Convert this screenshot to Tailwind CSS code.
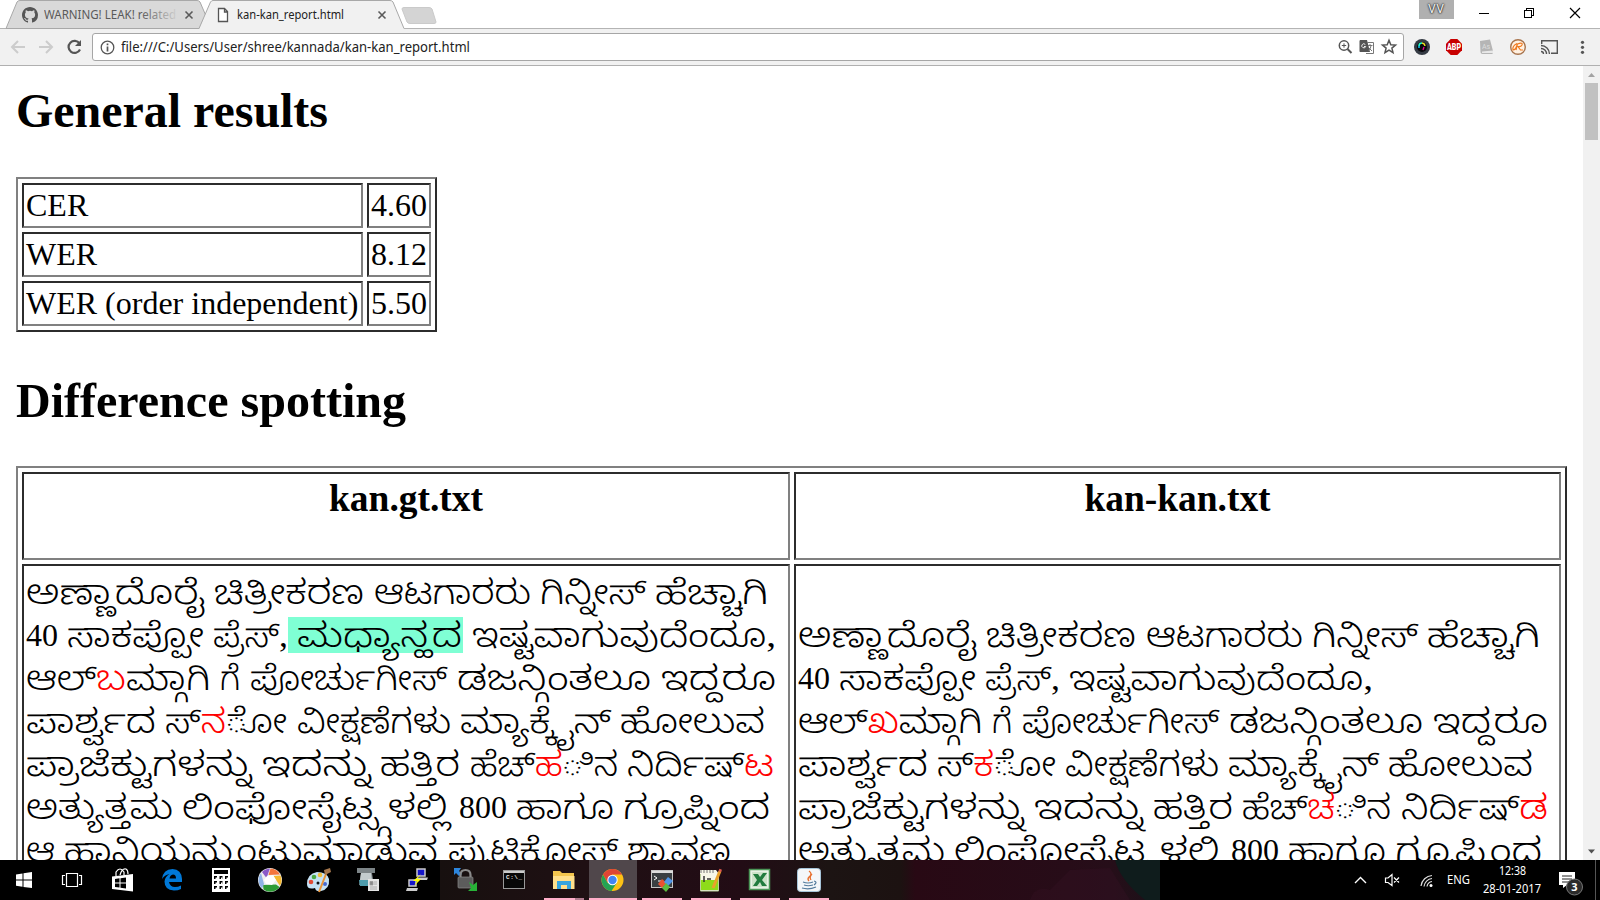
<!DOCTYPE html>
<html lang="kn">
<head>
<meta charset="utf-8">
<title>kan-kan_report.html</title>
<script src="https://cdn.jsdelivr.net/npm/@tailwindcss/browser@4"></script>
</head>
<body class="w-[1600px] h-[900px] overflow-hidden bg-white flex flex-col text-black font-['Noto_Sans','Open_Sans',sans-serif]">

<!-- Tab strip -->
<header class="relative h-[29px] shrink-0 bg-white">
  <svg class="absolute left-0 top-0" width="460" height="29" viewBox="0 0 460 29">
    <path d="M0 28.5H1600" stroke="#b4b4b4"/>
    <path d="M6 28.5 17 2Q18 .5 20 .5H197Q199 .5 200 2L206 16 200 28.500Z" fill="#d9d9d9" stroke="#a8a8a8"/>
    <path d="M199 29 210.500 2Q211.500 .5 213 .5H390Q392 .5 393 2L404 28.500V29Z" fill="#f1f1f1"/>
    <path d="M199 28.500 210.500 2Q211.500 .5 213 .5H390Q392 .5 393 2L404 28.500" fill="none" stroke="#a8a8a8"/>
    <path d="M404 7.500H429Q431 7.500 432 9L436 22Q436 23.500 434 23.500H410Q408 23.500 407 22L402 9Q402 7.500 404 7.500Z" fill="#d4d4d4" stroke="#cacaca"/>
    <path transform="translate(22 7)" fill="#555" d="M8 0C3.580 0 0 3.580 0 8c0 3.540 2.290 6.530 5.470 7.590.4.070.55-.17.55-.38v-1.490c-2.010.37-2.530-.49-2.690-.94-.09-.23-.48-.94-.82-1.130-.28-.15-.68-.52-.01-.53.63-.01 1.080.58 1.230.82.720 1.210 1.870.87 2.330.66.070-.52.28-.87.510-1.070-1.780-.2-3.640-.89-3.640-3.950 0-.87.310-1.590.82-2.150-.08-.2-.36-1.020.08-2.120 0 0 .67-.21 2.200.82a7.500 7.500 0 0 1 4 0c1.530-1.040 2.200-.82 2.200-.82.44 1.100.16 1.920.08 2.120.51.560.82 1.270.82 2.150 0 3.070-1.870 3.750-3.650 3.950.29.250.54.730.54 1.480v2.190c0 .21.150.46.55.38A8 8 0 0 0 16 8c0-4.420-3.580-8-8-8Z"/>
    <path d="M185.500 11.500l7 7m0-7l-7 7M378.500 11.500l7 7m0-7l-7 7" stroke="#5a5a5a" stroke-width="1.600"/>
    <path d="M218.500 8.500H224.500L227.500 11.500V21.500H218.500ZM224.500 8.500V12H227.500" fill="#fff" stroke="#555" stroke-width="1.300"/>
  </svg>
  <div class="absolute left-[44px] top-[6px] w-[132px] text-[12px] leading-[18px] whitespace-nowrap text-[#5a5a5a]"><span data-fit>WARNING! LEAK! related</span><div class="absolute right-0 top-0 w-[36px] h-[18px] bg-gradient-to-r from-[#d9d9d9]/0 to-[#d9d9d9]/90"></div></div>
  <div class="absolute left-[237px] top-[6px] w-[107px] text-[12px] leading-[18px] whitespace-nowrap text-[#222]"><span data-fit>kan-kan_report.html</span></div>
  <div class="absolute right-0 bottom-0 w-[1196px] h-px bg-[#b4b4b4]"></div>
  <div class="absolute left-[1419px] top-0 w-[35px] h-[19px] bg-[#b0b0b0] text-[#f5f5f5] text-[12px] leading-[18px] text-center tracking-[1px] [text-shadow:0_0_2px_#000,0_0_2px_#222]">VV</div>
  <svg class="absolute left-[1470px] top-0" width="120" height="26" fill="none" stroke="#000" shape-rendering="crispEdges">
    <path d="M9 13.500H19M54.500 10.500H61.500V17.500H54.500ZM56.500 10V8.500H63.500V15.500H62"/>
    <path d="M100 8l10 10m0-10l-10 10" shape-rendering="auto" stroke-width="1.200"/>
  </svg>
</header>

<!-- Toolbar -->
<nav class="h-[37px] shrink-0 bg-[#f1f1f1] border-b border-[#b0b0b0] flex items-start pt-[4px]">
  <svg class="shrink-0" width="92" height="28" fill="none" stroke="#ccc" stroke-width="2">
    <path d="M25 14H12.500M18 8l-6 6 6 6M39 14H51.500M46 8l6 6-6 6"/>
    <path d="M79.500 10.500A6 6 0 1 0 80 16.500" stroke="#555" stroke-width="2.200"/>
    <path d="M81 7V13H75Z" fill="#555" stroke="none"/>
  </svg>
  <div class="w-[1312px] h-[28px] shrink-0 bg-white border border-[#a6a6a6] rounded-[3px] flex items-center">
    <svg class="ml-[7px]" width="15" height="15" fill="none" stroke="#555"><circle cx="7.500" cy="7.500" r="6.300" stroke-width="1.300"/><path d="M7.500 6.500V11.500M7.500 3.500V5.200" stroke-width="1.700"/></svg>
    <div class="ml-[6px] w-[349px] text-[13.5px] leading-[20px] whitespace-nowrap text-[#222]"><span data-fit>file:///C:/Users/User/shree/kannada/kan-kan_report.html</span></div>
    <svg class="ml-auto mr-[5px]" width="60" height="18" fill="none" stroke="#555">
      <circle cx="6" cy="7.500" r="4.700" stroke-width="1.500"/><path d="M9.500 11l4 4" stroke-width="2"/><path d="M3.800 7.500H8.200M6 5.300V9.700"/>
      <path d="M22 2H29L32 14H22Q21.500 14 21.500 13V3Z" fill="#555" stroke="none"/><path d="M29 4.500H35.500V15.500H28M30 7.500H34.500M32 6V8M30.500 12.500Q33 10.500 33 7.500M30.500 9.500L34 13" stroke="#777"/><path d="M27.300 6.500A2 2 0 1 0 27.700 8.500H26" stroke="#eee"/>
      <path d="M51 2.300 52.800 6.800 57.500 7.100 53.900 10.100 55 14.700 51 12.200 47 14.700 48.100 10.100 44.500 7.100 49.200 6.800Z" stroke-width="1.500"/>
    </svg>
  </div>
  <svg class="shrink-0" width="196" height="28" viewBox="1404 33 196 28">
    <circle cx="1422" cy="47" r="8" fill="#343a43"/><circle cx="1422" cy="47" r="5" fill="#08080c"/><path d="M1419 46a3 3 0 0 1 3-3" stroke="#2fc" stroke-width="1.600" fill="none"/><path d="M1422 43a3.500 3.500 0 0 1 3 3" stroke="#ed2" stroke-width="1.400" fill="none"/><path d="M1419 46v2" stroke="#1be" stroke-width="1.600"/><path d="M1424 47l-1 3" stroke="#e09" stroke-width="1.300"/>
    <path d="M1450.700 39H1457.300L1462 43.700V50.300L1457.300 55H1450.700L1446 50.300V43.700Z" fill="#c80000"/>
    <text x="1447" y="50.300" textLength="14" lengthAdjust="spacingAndGlyphs" font-family="Roboto" font-weight="900" font-size="9" fill="#fff">ABP</text>
    <path d="M1480 41L1490 39.500 1493 51 1492.500 54H1482.500Q1480.500 54 1480.500 52Z" fill="#b5b5b5"/><path d="M1482 51.500L1493 50.500V53H1482Z" fill="#e8e8e8"/><text x="1482" y="49" font-size="7" font-family="Roboto" fill="#ddd">As</text>
    <circle cx="1518" cy="47" r="7.300" fill="#fff1e2" stroke="#a8744d" stroke-width="1.400"/><path d="M1517 43.500Q1512 46 1513 50Q1516 50 1517.500 43.500L1516 50M1517.500 44Q1523 42 1522 45Q1521 47 1518 46.500L1520.500 50H1523" fill="none" stroke="#f07a20" stroke-width="1.200"/>
    <path d="M1541.700 44V40.800H1557.300V53.200H1551" fill="none" stroke="#555" stroke-width="1.400"/><path d="M1541 51.500a2.500 2.500 0 0 1 2.500 2.500M1541 48.500a5.500 5.500 0 0 1 5.500 5.500M1541 45.500a8.500 8.500 0 0 1 8.500 8.500" fill="none" stroke="#555" stroke-width="1.400"/>
    <g fill="#555"><circle cx="1582.500" cy="42.300" r="1.600"/><circle cx="1582.500" cy="47.300" r="1.600"/><circle cx="1582.500" cy="52.300" r="1.600"/></g>
  </svg>
</nav>

<!-- Document viewport -->
<div class="h-[794px] shrink-0 flex overflow-hidden">
  <main class="w-[1583px] h-full overflow-hidden pl-[16px] text-[32px] font-['Liberation_Serif','Noto_Sans_Kannada',serif]">
    <h2 class="mt-[18px] h-[54px] w-[312px] text-[48px] leading-[54px] font-bold whitespace-nowrap"><span data-fit>General results</span></h2>
    <div class="mt-[39px] w-[421px] p-[4px] border-2 border-t-[#808080] border-l-[#808080] border-r-[#2c2c2c] border-b-[#2c2c2c] grid grid-cols-[341px_64px] gap-[4px] leading-[37px] whitespace-nowrap *:h-[45px] *:p-[2px] *:border-2 *:border-t-[#2c2c2c] *:border-l-[#2c2c2c] *:border-r-[#808080] *:border-b-[#808080]">
      <div>CER</div><div>4.60</div>
      <div>WER</div><div>8.12</div>
      <div>WER (order independent)</div><div>5.50</div>
    </div>
    <h2 class="mt-[42px] h-[54px] w-[390px] text-[48px] leading-[54px] font-bold whitespace-nowrap"><span data-fit>Difference spotting</span></h2>
    <div class="mt-[38px] w-[1551px] h-[600px] p-[4px] border-2 border-t-[#808080] border-l-[#808080] border-r-[#2c2c2c] border-b-[#2c2c2c] grid grid-cols-[768px_767px] grid-rows-[88px_500px] gap-[4px] whitespace-nowrap *:border-2 *:border-t-[#2c2c2c] *:border-l-[#2c2c2c] *:border-r-[#808080] *:border-b-[#808080]">
      <h3 class="text-center font-bold text-[37.44px] leading-[42px] pt-[4px]">kan.gt.txt</h3>
      <h3 class="text-center font-bold text-[37.44px] leading-[42px] pt-[4px]">kan-kan.txt</h3>
      <div class="pl-[2px] pt-[5px] leading-[43px] text-[34px] font-light *:h-[43px] *:flex *:justify-between">
        <div class="w-[742px]"><div class="w-[179px]"><span data-fit>ಅಣ್ಣಾದೊರೈ</span></div><div class="w-[150px]"><span data-fit>ಚಿತ್ರೀಕರಣ</span></div><div class="w-[157px]"><span data-fit>ಆಟಗಾರರು</span></div><div class="w-[106px]"><span data-fit>ಗಿನ್ನೀಸ್</span></div><div class="w-[113px]"><span data-fit>ಹೆಚ್ಚಾಗಿ</span></div></div>
        <div class="w-[750px]"><div class="w-[262px] flex justify-between"><div class="w-[32px] text-[32px]">40</div><div class="w-[137px]"><span data-fit>ಸಾಕಪ್ಪೋ</span></div><div class="w-[75px]"><span data-fit>ಪ್ರೆಸ್,</span></div></div><div class="w-[175px] h-[36px] mt-[3px] pl-[9px] leading-[38px] bg-[#7fffd4]"><div class="w-[165px]"><span data-fit>ಮಧ್ಯಾನ್ಹದ</span></div></div><div class="w-[313px] pl-[9px]"><div class="w-[304px]"><span data-fit>ಇಷ್ಟವಾಗುವುದೆಂದೂ,</span></div></div></div>
        <div class="w-[750px]"><div class="w-[184px]"><span data-fit>ಆಲ್&zwnj;<span class="text-[#f00]">ಬ</span>ಮ್ಗಾಗಿ</span></div><div class="w-[20px]"><span data-fit>ಗೆ</span></div><div class="w-[197px]"><span data-fit>ಪೋರ್ಚುಗೀಸ್</span></div><div class="w-[194px]"><span data-fit>ಡಜನ್ಗಿಂತಲೂ</span></div><div class="w-[115px]"><span data-fit>ಇದ್ದರೂ</span></div></div>
        <div class="w-[739px]"><div class="w-[130px]"><span data-fit>ಪಾರ್ಶ್ವದ</span></div><div class="w-[122px]"><span data-fit>ಸ್&zwnj;<span class="text-[#f00]">ನ</span>&zwnj;ೋ</span></div><div class="w-[154px]"><span data-fit>ವೀಕ್ಷಣೆಗಳು</span></div><div class="w-[151px]"><span data-fit>ಮ್ಯಾಕ್ಕೈನ್</span></div><div class="w-[145px]"><span data-fit>ಹೋಲುವ</span></div></div>
        <div class="w-[748px]"><div class="w-[226px]"><span data-fit>ಪ್ರಾಜೆಕ್ಟುಗಳನ್ನು</span></div><div class="w-[109px]"><span data-fit>ಇದನ್ನು</span></div><div class="w-[80px]"><span data-fit>ಹತ್ತಿರ</span></div><div class="w-[148px]"><span data-fit>ಹೆಚ್&zwnj;<span class="text-[#f00]">ಹ</span>&zwnj;ಿನ</span></div><div class="w-[147px]"><span data-fit>ನಿರ್ದಿಷ್&zwnj;<span class="text-[#f00]">ಟ</span></span></div></div>
        <div class="w-[744px]"><div class="w-[147px]"><span data-fit>ಅತ್ಯುತ್ತಮ</span></div><div class="w-[268px]"><span data-fit>ಲಿಂಫೋಸೈಟ್ಸ್ಗಳಲ್ಲಿ</span></div><div class="w-[48px] text-[32px]">800</div><div class="w-[98px]"><span data-fit>ಹಾಗೂ</span></div><div class="w-[147px]"><span data-fit>ಗ್ರೂಪ್ನಿಂದ</span></div></div>
        <div class="w-[705px]"><div class="w-[29px]"><span data-fit>ಆ</span></div><div class="w-[374px]"><span data-fit>ಹಾನಿಯನ್ನುಂಟುಮಾಡುವ</span></div><div class="w-[170px]"><span data-fit>ಪ್ರುಟಿಕೋಸ್</span></div><div class="w-[104px]"><span data-fit>ಶ್ರಾವಣ</span></div></div>
      </div>
      <div class="pl-[2px] pt-[48px] leading-[43px] text-[34px] font-light *:h-[43px] *:flex *:justify-between">
        <div class="w-[742px]"><div class="w-[179px]"><span data-fit>ಅಣ್ಣಾದೊರೈ</span></div><div class="w-[150px]"><span data-fit>ಚಿತ್ರೀಕರಣ</span></div><div class="w-[157px]"><span data-fit>ಆಟಗಾರರು</span></div><div class="w-[106px]"><span data-fit>ಗಿನ್ನೀಸ್</span></div><div class="w-[113px]"><span data-fit>ಹೆಚ್ಚಾಗಿ</span></div></div>
        <div class="w-[575px]"><div class="w-[262px] flex justify-between"><div class="w-[32px] text-[32px]">40</div><div class="w-[137px]"><span data-fit>ಸಾಕಪ್ಪೋ</span></div><div class="w-[75px]"><span data-fit>ಪ್ರೆಸ್,</span></div></div><div class="w-[313px] pl-[9px]"><div class="w-[304px]"><span data-fit>ಇಷ್ಟವಾಗುವುದೆಂದೂ,</span></div></div></div>
        <div class="w-[750px]"><div class="w-[184px]"><span data-fit>ಆಲ್&zwnj;<span class="text-[#f00]">ಖ</span>ಮ್ಗಾಗಿ</span></div><div class="w-[20px]"><span data-fit>ಗೆ</span></div><div class="w-[197px]"><span data-fit>ಪೋರ್ಚುಗೀಸ್</span></div><div class="w-[194px]"><span data-fit>ಡಜನ್ಗಿಂತಲೂ</span></div><div class="w-[115px]"><span data-fit>ಇದ್ದರೂ</span></div></div>
        <div class="w-[735px]"><div class="w-[130px]"><span data-fit>ಪಾರ್ಶ್ವದ</span></div><div class="w-[119px]"><span data-fit>ಸ್&zwnj;<span class="text-[#f00]">ಕ</span>&zwnj;ೋ</span></div><div class="w-[154px]"><span data-fit>ವೀಕ್ಷಣೆಗಳು</span></div><div class="w-[151px]"><span data-fit>ಮ್ಯಾಕ್ಕೈನ್</span></div><div class="w-[145px]"><span data-fit>ಹೋಲುವ</span></div></div>
        <div class="w-[750px]"><div class="w-[226px]"><span data-fit>ಪ್ರಾಜೆಕ್ಟುಗಳನ್ನು</span></div><div class="w-[109px]"><span data-fit>ಇದನ್ನು</span></div><div class="w-[80px]"><span data-fit>ಹತ್ತಿರ</span></div><div class="w-[149px]"><span data-fit>ಹೆಚ್&zwnj;<span class="text-[#f00]">ಚ</span>&zwnj;ಿನ</span></div><div class="w-[147px]"><span data-fit>ನಿರ್ದಿಷ್&zwnj;<span class="text-[#f00]">ಡ</span></span></div></div>
        <div class="w-[744px]"><div class="w-[147px]"><span data-fit>ಅತ್ಯುತ್ತಮ</span></div><div class="w-[268px]"><span data-fit>ಲಿಂಫೋಸೈಟ್ಸ್ಗಳಲ್ಲಿ</span></div><div class="w-[48px] text-[32px]">800</div><div class="w-[98px]"><span data-fit>ಹಾಗೂ</span></div><div class="w-[147px]"><span data-fit>ಗ್ರೂಪ್ನಿಂದ</span></div></div>
      </div>
    </div>
  </main>
  <aside class="w-[17px] h-full bg-[#f1f1f1] flex flex-col items-center">
    <svg width="17" height="17"><path d="M5 11H12L8.500 7Z" fill="#a3a3a3"/></svg>
    <div class="w-[13px] h-[57px] bg-[#c1c1c1]"></div>
    <svg class="mt-auto" width="17" height="17"><path d="M5 6.500H12L8.500 10.500Z" fill="#505050"/></svg>
  </aside>
</div>

<!-- Taskbar -->
<footer class="h-[40px] shrink-0 bg-black flex text-white">
  <svg class="shrink-0" width="1160" height="40" viewBox="0 860 1160 40">
    <defs>
      <linearGradient id="wall"><stop offset="0" stop-color="#17100f"/><stop offset=".2" stop-color="#1f1013"/><stop offset=".42" stop-color="#220c15"/><stop offset=".54" stop-color="#1c1413"/><stop offset=".64" stop-color="#1c1211"/><stop offset=".66" stop-color="#280914"/><stop offset=".87" stop-color="#270c18"/><stop offset=".93" stop-color="#260e19"/><stop offset="1" stop-color="#1b1118"/></linearGradient>
    </defs>
    <rect x="440" y="860" width="720" height="40" fill="url(#wall)"/>
    <path d="M1115 860H1160V900H1145Q1120 880 1115 860Z" fill="#0f1c1c"/>
    <path d="M1030 900Q1035 885 1050 890L1070 870 1110 868 1130 900Z" fill="#351223" opacity=".4"/>
    <rect x="589" y="860" width="48" height="40" fill="#50474b"/>
    <g fill="#ffaec9"><path d="M544 898H575V900H544ZM589 898H637V900H589ZM642 898H682V900H642ZM691 898H731V900H691ZM740 898H780V900H740ZM789 898H829V900H789Z"/></g><rect x="575" y="898" width="9" height="2" fill="#b07a8e"/>
    <!-- start -->
    <path d="M16 874.500L22.500 873.500V879.500H16ZM23.500 873.300L32 872V879.500H23.500ZM16 880.500H22.500V886.700L16 885.700ZM23.500 880.500H32V888L23.500 886.900Z" fill="#fff"/>
    <!-- task view -->
    <path d="M66.500 873.500H77.500V886.500H66.500ZM65 875.500H62.500V884.500H65M79 875.500H81.500V884.500H79" fill="none" stroke="#fff" stroke-width="1.200"/>
    <!-- store -->
    <path d="M112 876.500L133 874V891.500L112 889Z" fill="#fff"/><path d="M116 876V872Q120 866 124 872V875M120 875Q122 868 126 869Q128 870 128 874" fill="none" stroke="#fff" stroke-width="1.200"/><path d="M115 879L119.500 878.300V882.500H115ZM120.500 878.200L126 877.500V882.500H120.500ZM115 883.500H119.500V887.500L115 887ZM120.500 883.500H126V888.500L120.500 887.700Z" fill="#000"/>
    <!-- edge -->
    <path d="M162 879Q163 869.500 172.500 869Q181.500 869.500 182 879V882H169Q170 887 175 887Q178 887 181 885.500V889Q178 890.500 174 890.500Q164.500 890 164.500 881.500Q165 876.500 169.500 874Q164.500 875 162 879ZM169.500 878.500H176Q176 874.500 173 874.500Q170 875 169.500 878.500Z" fill="#0078d7"/>
    <!-- calculator -->
    <rect x="212" y="868" width="18" height="24" fill="#fff"/><path d="M214 870H228V874H214Z" fill="#000"/><path d="M214 876h3v3h-3zM219.500 876h3v3h-3zM225 876h3v3h-3zM214 881h3v3h-3zM219.500 881h3v3h-3zM225 881h3v3h-3zM214 886h3v3h-3zM219.500 886h3v3h-3zM225 886h3v3h-3z" fill="#000"/><path d="M215.500 877.500h1.500v1.500h-1.500zM221 877.500h1.500v1.500h-1.500zM226.500 877.500h1.500v1.500h-1.500zM215.500 882.500h1.500v1.500h-1.500zM221 882.500h1.500v1.500h-1.500zM226.500 882.500h1.500v1.500h-1.500zM215.500 887.500h1.500v1.500h-1.500zM221 887.500h1.500v1.500h-1.500zM226.500 887.500h1.500v1.500h-1.500z" fill="#fff"/>
    <!-- picasa -->
    <circle cx="270" cy="880" r="12" fill="#eee"/>
    <path d="M262 872A11.500 11.500 0 0 1 270 868.600L266.500 878Z" fill="#8a5ac8"/><path d="M270.500 868.500A11.500 11.500 0 0 1 280 874.500L268.500 875Z" fill="#f4753c"/><path d="M280.500 875.500A11.500 11.500 0 0 1 280 886L273.500 876Z" fill="#f5b82e"/><path d="M279.500 887A11.500 11.500 0 0 1 263.500 889.500L263 885 276 884.500Z" fill="#2d9c35"/><path d="M262 888.500A11.500 11.500 0 0 1 261 873L264 884Z" fill="#8fb3e6"/><path d="M267 876L273 875 276 880 272 885 266 884 264 880Z" fill="#fff"/>
    <!-- paint -->
    <path d="M307 884Q307 874 317 872Q327 872 329 879Q330 889 321 891Q316 892 315 888Q307 890 307 884Z" fill="#c5e2f5"/><circle cx="311" cy="882" r="2.300" fill="#e34b35"/><circle cx="314" cy="877" r="2.300" fill="#4cab45"/><circle cx="320" cy="875" r="2.300" fill="#f1bd3b"/><circle cx="318" cy="883" r="1.500" fill="#111"/><circle cx="325" cy="884" r="2" fill="#4668d0"/><path d="M319 892L326 874" stroke="#e8943a" stroke-width="2"/><path d="M325 875L324 870 330 868 331 872Z" fill="#a5774d"/>
    <!-- printer -->
    <path d="M357 868H375V873H372L374 885H359L361 873H357Z" fill="#7d8588"/><path d="M361 873H371L372 880H360Z" fill="#c4ccce"/><path d="M359 880H372V886H360Z" fill="#4e9cac"/><path d="M368 879H379V891H368Z" fill="#e4e4e4"/><path d="M370 881.500H373V885H370ZM374 882H377M374 884H377M370 887H377M370 889H377" fill="#888" stroke="#999" stroke-width=".8"/>
    <!-- putty -->
    <path d="M417 869H425V876H417ZM409 880H416V886H409Z" fill="#1515c8" stroke="#ccc" stroke-width="1.500"/><path d="M417 877.500H428L427 880H417ZM407 888H418L417 891H406Z" fill="#ccc"/><path d="M421 874L413 881H417L414 886L421 879H417Z" fill="#ff0"/>
    <!-- lock -->
    <path d="M454 868H461L459 871 462 874 459 876 456 873 454 875Z" fill="#2d86de"/><path d="M460.500 879V875Q460.500 870 465.500 870Q470.500 870 470.500 875V879" fill="none" stroke="#8a8a8a" stroke-width="2.200"/><rect x="458" y="877" width="15" height="11" rx="1" fill="#5c5c5c" stroke="#8a8a8a" stroke-width=".7"/><path d="M469 882L473 885 477 882V891H468L471 888Z" fill="#28b338"/>
    <!-- cmd -->
    <rect x="503.500" y="870.500" width="21" height="18" fill="#080808" stroke="#999"/><path d="M504 872H524" stroke="#ccc" stroke-width="2"/><text x="506" y="879" font-size="6" font-family="Liberation Mono" font-weight="bold" fill="#eee" textLength="16">C:\_</text>
    <!-- explorer -->
    <path d="M553 871H560L562 873H574V889H553Z" fill="#f3c64e"/><path d="M553 876H574.500V889H553Z" fill="#ffe08b"/><path d="M557 881H571V889H567V885H561V889H557Z" fill="#35a5df"/>
    <!-- chrome -->
    <circle cx="612.500" cy="880" r="11" fill="#fbc116"/><path d="M603 874.500A11 11 0 0 1 622 874.500H612.500L607.500 882.500Z" fill="#df4535"/><path d="M603 874.500A11 11 0 0 0 611.500 891L617 882.500 607.500 882.800Z" fill="#24a353"/><circle cx="612.500" cy="880" r="5.200" fill="#fff"/><circle cx="612.500" cy="880" r="4.200" fill="#4285f4"/>
    <!-- git terminal -->
    <rect x="651.500" y="870.500" width="21" height="17" fill="#3a3f42" stroke="#c5c5c5"/><path d="M652 872H673" stroke="#ddd" stroke-width="2"/><path d="M654 876l3 2-3 2M658 881h3" stroke="#fff" fill="none"/><path d="M662 879L667 883 662 888 658 884Z" fill="#e95231"/><path d="M668 877L673 881 668 886 664 882Z" fill="#4f95e8"/><path d="M666 883L670 887 666 892 662 888Z" fill="#5cbb40"/>
    <!-- notepad++ -->
    <path d="M700 870H716L719 874V891H700Z" fill="#f7f7e8"/><path d="M701 880H718V890H701Z" fill="#8edb1a"/><path d="M700.500 874V891H718.500V878" fill="none" stroke="#b9cf9a"/><path d="M701 870v3M704 870v3M707 870v3M710 870v3M713 870v3" stroke="#777"/><path d="M704 876V882M707 879H711" stroke="#333" stroke-width="1.500"/><path d="M713 888L720 871" stroke="#eaa22b" stroke-width="3"/><path d="M719 870l2.500 1" stroke="#df5b4f" stroke-width="2.500"/>
    <!-- excel -->
    <rect x="749.500" y="869.500" width="20" height="20" fill="#e7f1e5" stroke="#4b9657" stroke-width="1.500"/><path d="M752 872H767V887H752Z" fill="#cce2c9"/><path d="M753 874H758L760 877 763 873H767L762 880 767 886H762L760 882 757 886H753L757 880Z" fill="#217b3e"/>
    <!-- java -->
    <rect x="797.500" y="868.500" width="23" height="23" rx="3" fill="#f4f7f9" stroke="#a7c5da"/><path d="M809 871Q813 874 809 877Q807 879 809 881M812 874Q809 877 811 880" fill="none" stroke="#e76f2e" stroke-width="1.300"/><path d="M803 882Q808 884 813 882M804 885Q808 886.500 813 885M802 888Q809 890 816 887M814 881Q818 882 814 885" fill="none" stroke="#537b9c" stroke-width="1.200"/>
  </svg>
  <div class="ml-auto flex w-[246px] h-full text-[12px] leading-[18px] whitespace-nowrap">
    <svg class="shrink-0" width="86" height="40" fill="none" stroke="#fff">
      <path d="M1 23L6.500 17.500 12 23" stroke-width="1.400"/>
      <path d="M31.500 18H34L38 14.500V25.500L34 22.500H31.500ZM40 17.500l5 5m0-5l-5 5" stroke-width="1.200"/>
      <path d="M67 26A12 12 0 0 1 78 15.500M70 26.500A9 9 0 0 1 78 18.500M73 26.500A6 6 0 0 1 78 21.500" stroke-width="1.200" stroke="#ddd"/><circle cx="77" cy="25.500" r="1.500" fill="#fff" stroke="none"/>
    </svg>
    <div class="ml-[7px] mt-[11px] w-[23px] shrink-0"><span data-fit>ENG</span></div>
    <div class="ml-[13px] mt-[2px] w-[58px] shrink-0 flex flex-col items-center"><div class="w-[27px]"><span data-fit>12:38</span></div><div class="w-[58px]"><span data-fit>28-01-2017</span></div></div>
    <svg class="ml-[16px] shrink-0" width="42" height="40"><path d="M2 12H18V25H10L6 28V25H2Z" fill="#fff"/><path d="M5 16H15M5 19H15M5 22H12" stroke="#222"/><circle cx="17.500" cy="27" r="8" fill="#2b2b2b" stroke="#777"/><text x="17.500" y="31" text-anchor="middle" font-size="11" font-weight="bold" font-family="Open Sans" fill="#fff">3</text><path d="M38.500 0V40" stroke="#555"/></svg>
  </div>
</footer>

<script>
// Scale each label horizontally so it fills the width of its box.
function fit(el) {
  el.style.transform = 'none';
  var w = el.getBoundingClientRect().width;
  if (w) el.style.transform = 'scaleX(' + el.parentElement.clientWidth / w + ')';
}
var labels = Array.from(document.querySelectorAll('[data-fit]'));
function fitAll() { labels.forEach(fit); }
var watcher = new ResizeObserver(fitAll);
labels.forEach(function (el) {
  el.style.display = 'inline-block';
  el.style.transformOrigin = '0 50%';
  watcher.observe(el);
  watcher.observe(el.parentElement);
});
window.addEventListener('load', fitAll);
</script>
</body>
</html>
